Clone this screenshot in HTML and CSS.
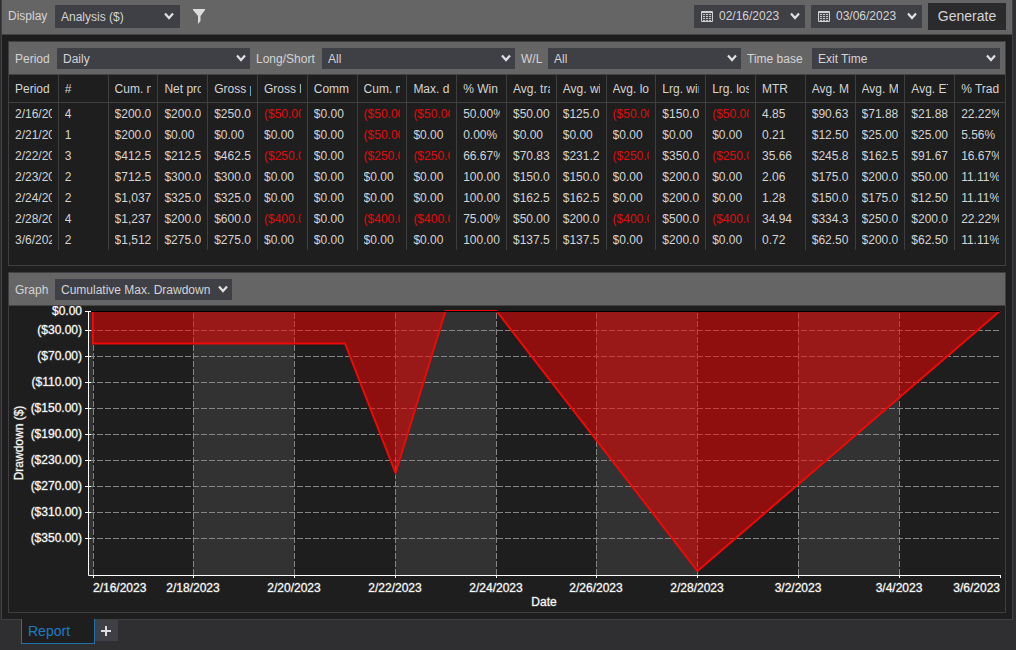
FILE: index.html
```html
<!DOCTYPE html>
<html lang="en">
<head>
<meta charset="utf-8">
<title>Report</title>
<link rel="stylesheet" href="styles.css">
</head>
<body>
<svg class="defs" aria-hidden="true">
  <symbol id="chevron" viewBox="0 0 10 8"><path d="M1 1.5 5 6 9 1.5" fill="none" stroke="#e0e0e0" stroke-width="2.2"/></symbol>
  <symbol id="calendar" viewBox="0 0 12 11">
    <path d="M.5 .5H11.5V10.5H.5Z" fill="#4a4a50" stroke="#d0d0d0"/>
    <path d="M1 1.500H11" stroke="#d0d0d0"/>
    <path d="M2 3.500H10M2 5.500H10M2 7.500H10M2 9.500H10" stroke="#c4c4c4" stroke-dasharray="2 1"/>
  </symbol>
</svg>
<main class="window">
  <header class="toolbar">
    <label class="toolbar-label" for="display">Display</label>
    <span class="dropdown dropdown-display"><select id="display"><option>Analysis ($)</option></select><svg class="chevron"><use href="#chevron"/></svg></span>
    <button class="filter" aria-label="Filter"><svg width="12" height="15" viewBox="0 0 12 15"><path d="M0 0H12V1L7.500 7V12L5 15V7L0 1Z" fill="#dcdcdc"/></svg></button>
    <div class="toolbar-right">
      <button class="date"><svg class="calendar"><use href="#calendar"/></svg><span>02/16/2023</span><svg class="chevron"><use href="#chevron"/></svg></button>
      <button class="date"><svg class="calendar"><use href="#calendar"/></svg><span>03/06/2023</span><svg class="chevron"><use href="#chevron"/></svg></button>
      <button class="generate">Generate</button>
    </div>
  </header>
  <div class="content">
    <section class="panel panel-table">
      <div class="bar">
        <label class="label-period" for="period">Period</label>
        <span class="dropdown dropdown-fill"><select id="period"><option>Daily</option></select><svg class="chevron"><use href="#chevron"/></svg></span>
        <label class="label-side" for="side">Long/Short</label>
        <span class="dropdown dropdown-fill"><select id="side"><option>All</option></select><svg class="chevron"><use href="#chevron"/></svg></span>
        <label class="label-wl" for="wl">W/L</label>
        <span class="dropdown dropdown-fill"><select id="wl"><option>All</option></select><svg class="chevron"><use href="#chevron"/></svg></span>
        <label class="label-base" for="base">Time base</label>
        <span class="dropdown dropdown-last"><select id="base"><option>Exit Time</option></select><svg class="chevron"><use href="#chevron"/></svg></span>
      </div>
      <table class="grid">
        <thead><tr id="head"></tr></thead>
        <tbody id="rows"></tbody>
      </table>
    </section>
    <section class="panel">
      <div class="bar">
        <label class="label-graph" for="graph">Graph</label>
        <span class="dropdown dropdown-graph"><select id="graph"><option>Cumulative Max. Drawdown</option></select><svg class="chevron"><use href="#chevron"/></svg></span>
      </div>
      <svg class="chart" id="chart" viewBox="9 306 996 306" role="img" aria-label="Cumulative Max. Drawdown"></svg>
    </section>
  </div>
</main>
<nav class="tabs">
  <button class="tab">Report</button>
  <button class="tab-add" aria-label="Add tab"><svg width="10" height="10" viewBox="0 0 10 10"><path d="M5 0V10M0 5H10" stroke="#dcdce0" stroke-width="2"/></svg></button>
</nav>
<script src="app.js"></script>
</body>
</html>
```
FILE: styles.css
```css
* { box-sizing: border-box; }

body {
  margin: 0;
  padding: 0 3px 0 1px;
  min-height: 100vh;
  background: #2f2f31;
  color: #d4d4d4;
  font: 12px/16px "Liberation Sans", Arial, sans-serif;
}

button, select { font: inherit; color: inherit; border: 0; border-radius: 0; margin: 0; }
button { padding: 0; }
svg { display: block; }
.defs { position: absolute; width: 0; height: 0; }

.window {
  background: #1e1e1e;
  border: solid #3f3f42;
  border-width: 0 1px 1px;
}

.toolbar {
  display: flex;
  align-items: center;
  height: 35px;
  padding: 0 6px 2px;
  background: #656565;
  border-bottom: 1px solid #434343;
}
.toolbar-label { width: 47px; }
.toolbar-right { display: flex; align-items: center; gap: 6px; margin-left: auto; }

.dropdown { display: grid; align-items: center; height: 21px; background: #3f3f46; }
.dropdown select {
  grid-area: 1 / 1;
  width: 100%;
  height: 100%;
  padding: 1px 20px 0 6px;
  appearance: none;
  background: transparent;
}
.dropdown .chevron { grid-area: 1 / 1; justify-self: end; margin-right: 4px; pointer-events: none; }
.chevron { width: 10px; height: 8px; }
.dropdown-display { width: 125px; height: 23px; }
.dropdown-display .chevron { margin-right: 6px; }
.dropdown-graph { width: 177px; }
.dropdown-fill { flex: 193 1 0; }
.dropdown-last { flex: 188 1 0; }

.filter { margin-left: 13px; background: none; }

.date {
  display: flex;
  align-items: center;
  width: 111px;
  height: 23px;
  padding: 0 5px 0 7px;
  background: #3f3f46;
}
.date span { margin-left: 6px; }
.date .chevron { margin-left: auto; }
.calendar { width: 12px; height: 11px; }

.generate { width: 78px; height: 27px; background: #2b2b2d; font-size: 14px; }

.content { display: grid; gap: 6px; padding: 6px; }
.panel { min-width: 0; border: 1px solid #3f3f42; }
.panel-table { padding-bottom: 15px; }

.bar {
  display: flex;
  align-items: center;
  gap: 6px;
  height: 33px;
  padding: 0 5px 0 6px;
  background: #656565;
  border-bottom: 1px solid #434343;
}
.bar label { padding-top: 1px; white-space: nowrap; }
.label-period { width: 36px; }
.label-side { width: 60px; }
.label-wl { width: 21px; }
.label-base { width: 59px; }
.label-graph { width: 34px; }

.grid { width: 100%; table-layout: fixed; border-collapse: separate; border-spacing: 0; }
.grid th, .grid td {
  height: 21px;
  padding: 0 6px;
  border-right: 1px solid #3f3f42;
  font-weight: normal;
  text-align: left;
}
.grid th { height: 28px; border-bottom: 1px solid #3f3f42; }
.grid th:last-child, .grid td:last-child { border-right: 0; }
.grid span { display: block; overflow: hidden; white-space: nowrap; }
.grid .loss { color: #e00c0c; }

.chart { width: 100%; height: auto; }
.chart text { fill: #ffffff; stroke: #ffffff; stroke-opacity: .3; font-size: 12px; }
.chart .band { fill: #323232; }
.chart .gridline { stroke: #858585; stroke-dasharray: 6 2; }
.chart .area { fill: #ff0000; fill-opacity: .5; }
.chart .line { fill: none; stroke: #ee0808; stroke-width: 2; }
.chart .zero { stroke: #000000; }
.chart .axis { fill: none; stroke: #ffffff; }

.tabs { display: flex; align-items: flex-start; padding-left: 20px; }
.tab {
  width: 74px;
  height: 25px;
  margin-top: -1px;
  padding: 0 6px;
  border: solid #1c73b0;
  border-width: 0 1px 1px;
  background: #1e1e1e;
  color: #1c7cc0;
  font-size: 14px;
  text-align: left;
}
.tab-add { display: grid; align-items: center; width: 23px; height: 21px; padding-left: 6px; background: #3f3f46; }
```
FILE: app.js
```js
const columns = ["Period", "#", "Cum. net", "Net pro", "Gross profit", "Gross loss", "Comm",
  "Cum. max", "Max. drawdown", "% Win", "Avg. trade", "Avg. winner", "Avg. loser", "Lrg. winner",
  "Lrg. loser", "MTR", "Avg. MAE", "Avg. MFE", "Avg. ETD", "% Trade"];

const rows = [
  "2/16/2023|4|$200.0|$200.0|$250.0|($50.00)|$0.00|($50.00)|($50.00)|50.00%|$50.00|$125.0|($50.00)|$150.0|($50.00)|4.85|$90.63|$71.88|$21.88|22.22%",
  "2/21/2023|1|$200.0|$0.00|$0.00|$0.00|$0.00|($50.00)|$0.00|0.00%|$0.00|$0.00|$0.00|$0.00|$0.00|0.21|$12.50|$25.00|$25.00|5.56%",
  "2/22/2023|3|$412.5|$212.5|$462.5|($250.00)|$0.00|($250.00)|($250.00)|66.67%|$70.83|$231.2|($250.00)|$350.0|($250.00)|35.66|$245.8|$162.5|$91.67|16.67%",
  "2/23/2023|2|$712.5|$300.0|$300.0|$0.00|$0.00|$0.00|$0.00|100.00|$150.0|$150.0|$0.00|$200.0|$0.00|2.06|$175.0|$200.0|$50.00|11.11%",
  "2/24/2023|2|$1,037|$325.0|$325.0|$0.00|$0.00|$0.00|$0.00|100.00|$162.5|$162.5|$0.00|$200.0|$0.00|1.28|$150.0|$175.0|$12.50|11.11%",
  "2/28/2023|4|$1,237|$200.0|$600.0|($400.00)|$0.00|($400.00)|($400.00)|75.00%|$50.00|$200.0|($400.00)|$500.0|($400.00)|34.94|$334.3|$250.0|$200.0|22.22%",
  "3/6/2023|2|$1,512|$275.0|$275.0|$0.00|$0.00|$0.00|$0.00|100.00|$137.5|$137.5|$0.00|$200.0|$0.00|0.72|$62.50|$200.0|$62.50|11.11%"
];

document.getElementById("head").innerHTML = columns.map(c => `<th scope="col"><span>${c}</span></th>`).join("");
document.getElementById("rows").innerHTML = rows.map(r => "<tr>" + r.split("|").map(v =>
  `<td${v[0] === "(" ? ' class="loss"' : ""}><span>${v}</span></td>`).join("") + "</tr>").join("");

const yTicks = [[311, "$0.00"], [330, "($30.00)"], [356, "($70.00)"], [382, "($110.00)"], [408, "($150.00)"],
  [434, "($190.00)"], [460, "($230.00)"], [486, "($270.00)"], [512, "($310.00)"], [538, "($350.00)"]];
const xTicks = [[93, "2/16/2023"], [193, "2/18/2023"], [294, "2/20/2023"], [395, "2/22/2023"], [496, "2/24/2023"],
  [596, "2/26/2023"], [697, "2/28/2023"], [798, "3/2/2023"], [899, "3/4/2023"], [1000, "3/6/2023"]];
const bands = [[89, 93], [193, 294], [395, 496], [596, 697], [798, 899]];
const series = "93,311 93,343.5 345,343.5 395.5,473 445.5,311 496.5,311 697.5,571 1000,311";

let art = "";
bands.forEach(([a, b]) => {
  art += `<rect class="band" x="${a}" y="312" width="${b - a}" height="263"/>`;
});
yTicks.slice(1).forEach(([y]) => { art += `<path class="gridline" d="M89 ${y}.5H1000"/>`; });
xTicks.slice(0, -1).forEach(([x]) => { art += `<path class="gridline" d="M${x}.5 575V312"/>`; });
art += `<polygon class="area" points="${series}"/><polyline class="line" points="${series}"/>`;
art += '<path class="zero" d="M89 311.5H1000"/>';
art += '<path class="axis" d="M88.5 311V575.5H1001"/>';
yTicks.forEach(([y, t]) => {
  art += `<path class="axis" d="M85 ${y}.5H91"/><text x="82" y="${y + 4}" text-anchor="end">${t}</text>`;
});
xTicks.forEach(([x, t], i) => {
  const anchor = i === 0 ? "start" : i === xTicks.length - 1 ? "end" : "middle";
  art += `<path class="axis" d="M${x}.5 575V578"/><text x="${x}" y="592" text-anchor="${anchor}">${t}</text>`;
});
art += '<text x="544" y="606" text-anchor="middle">Date</text>';
art += '<text transform="translate(23 443) rotate(-90)" text-anchor="middle">Drawdown ($)</text>';
document.getElementById("chart").innerHTML = art;
```
